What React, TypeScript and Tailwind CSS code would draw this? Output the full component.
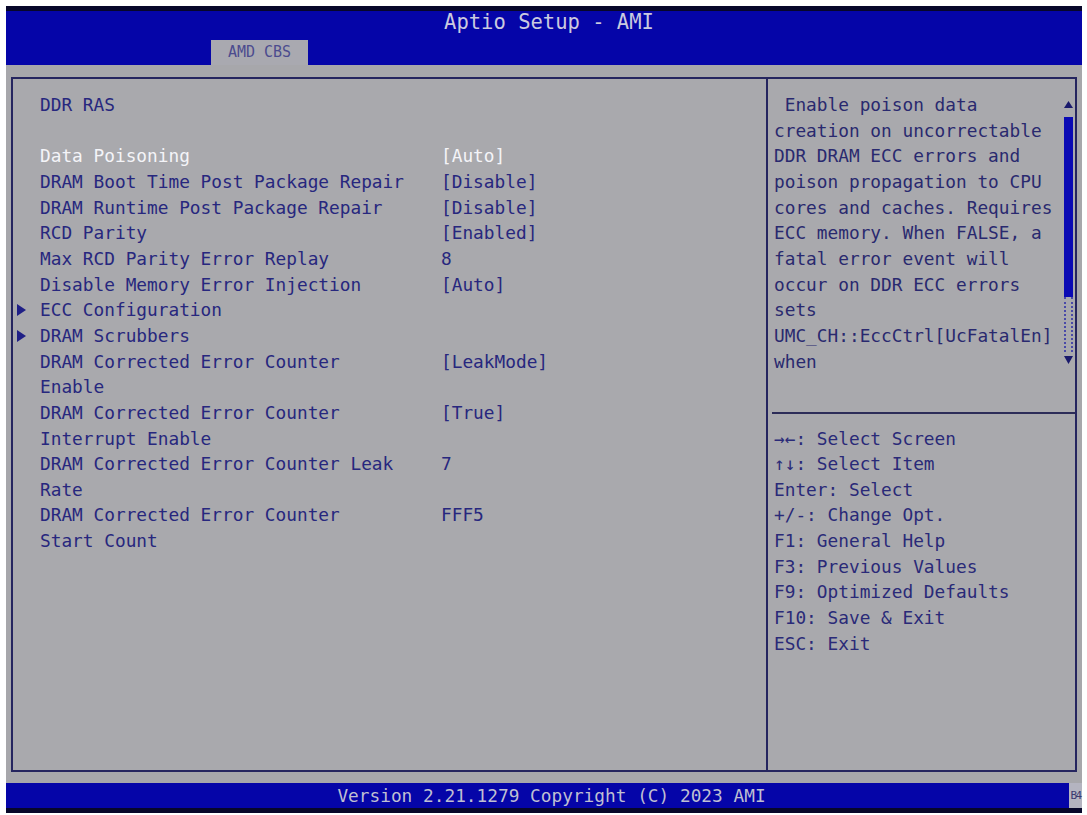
import React from 'react';

type Item = {
    lines: string[];
    value?: string;
    submenu?: boolean;
    active?: boolean;
};

const items: Item[] = [
    { lines: ['Data Poisoning'], value: '[Auto]', active: true },
    { lines: ['DRAM Boot Time Post Package Repair'], value: '[Disable]' },
    { lines: ['DRAM Runtime Post Package Repair'], value: '[Disable]' },
    { lines: ['RCD Parity'], value: '[Enabled]' },
    { lines: ['Max RCD Parity Error Replay'], value: '8' },
    { lines: ['Disable Memory Error Injection'], value: '[Auto]' },
    { lines: ['ECC Configuration'], submenu: true },
    { lines: ['DRAM Scrubbers'], submenu: true },
    { lines: ['DRAM Corrected Error Counter', 'Enable'], value: '[LeakMode]' },
    { lines: ['DRAM Corrected Error Counter', 'Interrupt Enable'], value: '[True]' },
    { lines: ['DRAM Corrected Error Counter Leak', 'Rate'], value: '7' },
    { lines: ['DRAM Corrected Error Counter', 'Start Count'], value: 'FFF5' },
];

const help = [
    ' Enable poison data',
    'creation on uncorrectable',
    'DDR DRAM ECC errors and',
    'poison propagation to CPU',
    'cores and caches. Requires',
    'ECC memory. When FALSE, a',
    'fatal error event will',
    'occur on DDR ECC errors',
    'sets',
    'UMC_CH::EccCtrl[UcFatalEn]',
    'when',
];

const keys = [
    '→←: Select Screen',
    '↑↓: Select Item',
    'Enter: Select',
    '+/-: Change Opt.',
    'F1: General Help',
    'F3: Previous Values',
    'F9: Optimized Defaults',
    'F10: Save & Exit',
    'ESC: Exit',
];

function Row({ item }: { item: Item }) {
    const color = item.active ? 'text-[#f4f4f8]' : 'text-[#27277e]';
    return (
        <div className="flex">
            {/* submenu marker */}
            <div className="w-[23px] flex items-start">
                {item.submenu && (
                    <svg width="9" height="12" viewBox="0 0 9 12" className="mt-[7px]">
                        <path d="M0 0 L9 6 L0 12 Z" fill="#1f1f86" />
                    </svg>
                )}
            </div>
            <div className="grid grid-cols-[401px_1fr]">
                <div className={color}>
                    {item.lines.map((l) => (
                        <div key={l} className="whitespace-pre">{l}</div>
                    ))}
                </div>
                <div className={`whitespace-pre ${color}`}>{item.value}</div>
            </div>
        </div>
    );
}

export default function App() {
    return (
        <div className="w-[1087px] h-[815px] bg-white pt-[6px] pl-[6px] pr-[5px] pb-[2px] flex flex-col font-['DejaVu_Sans_Mono','Liberation_Mono',monospace] text-[17.8px] leading-[25.65px]">
            {/* Title bar */}
            <div className="h-[59px] bg-[#0505a8] border-t-[5px] border-[#07072a] flex flex-col">
                <div className="h-[22px] flex items-center justify-center pl-[10px] text-[#cacadf] text-[20.5px] leading-none">
                    Aptio Setup - AMI
                </div>
                <div className="ml-[205px] mt-[7px] w-[97px] h-[25px] bg-[#a9a9b0] text-[#4c4c8e] text-[15px] leading-none flex items-center justify-center">
                    AMD CBS
                </div>
            </div>

            {/* Body */}
            <div className="flex-1 bg-[#a7a7ab] px-[5px] pt-[12px] pb-[11px]">
                <div className="h-full border-2 border-[#25255f] bg-[#a9a9ad] flex">
                    {/* Left: settings */}
                    <div className="w-[755px] pl-[4px] pt-[13px] border-r-2 border-[#25255f]">
                        <div className="pl-[23px] text-[#27277e]">DDR RAS</div>
                        <div className="h-[25.65px]" />
                        {items.map((it) => (
                            <Row key={it.lines.join(' ')} item={it} />
                        ))}
                    </div>

                    {/* Right: help */}
                    <div className="flex-1 pt-[13px] flex flex-col">
                        <div className="flex">
                            <div className="flex-1 pl-[6px] text-[#29296f]">
                                {help.map((h) => (
                                    <div key={h} className="whitespace-pre">{h}</div>
                                ))}
                            </div>
                            {/* Scrollbar */}
                            <div className="w-[10px] mr-[2px] mt-[9px] flex flex-col items-center">
                                <svg width="9" height="7" viewBox="0 0 9 7">
                                    <path d="M4.5 0 L9 7 L0 7 Z" fill="#1a1a6c" />
                                </svg>
                                <div className="mt-[9px] w-[9px] h-[180px] bg-[#0a0ab4]" />
                                <div className="w-[9px] h-[55px] border-x-2 border-dotted border-[#4a4aa8]" />
                                <svg width="9" height="8" viewBox="0 0 9 8" className="mt-[4px]">
                                    <path d="M0 0 L9 0 L4.5 8 Z" fill="#1a1a6c" />
                                </svg>
                            </div>
                        </div>
                        <div className="h-[25.65px]" />
                        <div className="h-[25.65px] flex items-center pl-[4px]">
                            <div className="w-full h-[2px] bg-[#2c2c58]" />
                        </div>
                        <div className="pl-[6px] text-[#2a2a78]">
                            {keys.map((k) => (
                                <div key={k} className="whitespace-pre">{k}</div>
                            ))}
                        </div>
                    </div>
                </div>
            </div>

            {/* Footer */}
            <div className="h-[30px] bg-[#0505a8] border-b-[5px] border-[#07072a] flex">
                <div className="flex-1 flex items-center justify-center pl-[28px] text-[#bfbfd2] leading-none">
                    Version 2.21.1279 Copyright (C) 2023 AMI
                </div>
                <div className="w-[13px] bg-[#b4b4c0] text-[#3a3a70] text-[11px] tracking-[-1.5px] leading-none flex items-center justify-center">
                    B4
                </div>
            </div>
        </div>
    );
}
